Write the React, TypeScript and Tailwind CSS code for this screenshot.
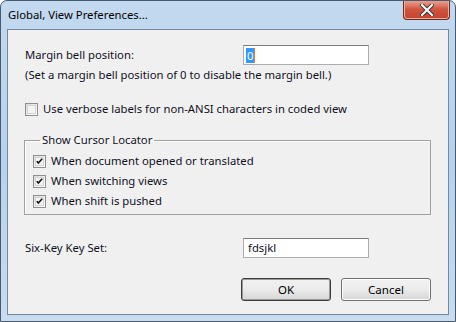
import React from 'react';

function CheckBox({ checked }: { checked?: boolean }) {
  return (
    <span className="flex h-[13px] w-[13px] shrink-0 items-center justify-center border border-[#8e8f8f] bg-gradient-to-br from-[#dcdcdc] to-[#ffffff]">
      <span className="flex h-[9px] w-[9px] items-center justify-center border border-[#d3d3d3] bg-[#f4f4f4]">
        {checked && (
          <svg width="9" height="9" viewBox="0 0 9 9">
            <path d="M1 4 L3 6.5 L8 1" fill="none" stroke="#111" strokeWidth="2" />
          </svg>
        )}
      </span>
    </span>
  );
}

function CheckRow({ label, checked }: { label: string; checked?: boolean }) {
  return (
    <div className="flex h-[16px] items-center gap-[5px]">
      <CheckBox checked={checked} />
      <span>{label}</span>
    </div>
  );
}

function Button({ label, primary }: { label: string; primary?: boolean }) {
  return (
    <button
      className={
        'h-[23px] w-[90px] rounded-[3px] border bg-gradient-to-b from-[#f2f2f2] via-[#ebebeb] to-[#d6d6d6] text-[11.5px] text-black ' +
        (primary ? 'border-[#3c3c3c] shadow-[inset_0_0_0_1px_#9a9a9a]' : 'border-[#707070] shadow-[inset_0_0_0_1px_#fcfcfc]')
      }
    >
      {label}
    </button>
  );
}

export default function App() {
  return (
    <div
      className="flex h-[322px] w-[456px] flex-col overflow-hidden rounded-t-[7px] border border-[#4a5a6e] bg-gradient-to-b from-[#c3d9f0] via-[#b8d1ec] to-[#c8dcf0] text-[11.3px] text-[#10101e]"
      style={{ fontFamily: '"Noto Sans", "Open Sans", sans-serif' }}
    >
      {/* title bar */}
      <div className="flex h-[28px] shrink-0 items-start justify-between pl-[7px] pr-[5px]">
        <span className="mt-[6px] leading-[16px] text-black">Global, View Preferences...</span>
        <div className="-mt-px flex h-[20px] w-[47px] items-center justify-center rounded-b-[4px] border border-t-0 border-[#6e2a1e] bg-gradient-to-b from-[#e9a89a] via-[#d0533d] to-[#c4452e] shadow-[inset_0_0_0_1px_#eab0a3]">
          <svg width="14" height="12" viewBox="0 0 14 12">
            <path d="M2 1 L12 11 M12 1 L2 11" stroke="#3a3a3a" strokeWidth="4" strokeLinecap="square" />
            <path d="M2 1 L12 11 M12 1 L2 11" stroke="#ffffff" strokeWidth="2" strokeLinecap="square" />
          </svg>
        </div>
      </div>

      {/* client area */}
      <div className="mx-[6px] mb-[6px] flex flex-1 flex-col border border-[#7288a3] bg-[#f0f0f0] pl-[16px] pr-[17px] pt-[15px]">
        <div className="flex h-[20px] items-center">
          <span className="ml-px w-[218px]">Margin bell position:</span>
          <div className="flex h-[20px] w-[126px] items-center border border-[#abadb3] border-t-[#7b7b7b] bg-white pl-[2px]">
            <span className="bg-[#3399ff] px-px leading-[15px] text-white">0</span>
            <span className="h-[15px] w-px bg-[#e67e22]" />
          </div>
        </div>

        <div className="ml-px mt-[2px] leading-[16px]">(Set a margin bell position of 0 to disable the margin bell.)</div>

        <div className="ml-px mt-[18px]">
          <CheckRow label="Use verbose labels for non-ANSI characters in coded view" />
        </div>

        <fieldset className="mt-[15px] border border-[#a0a0a0] pb-[5px] pl-[8px] shadow-[inset_1px_1px_0_#ffffff]">
          <legend className="ml-[7px] px-[2px] leading-[16px]">Show Cursor Locator</legend>
          <div className="mt-[5px] flex flex-col gap-[4px]">
            <CheckRow label="When document opened or translated" checked />
            <CheckRow label="When switching views" checked />
            <CheckRow label="When shift is pushed" checked />
          </div>
        </fieldset>

        <div className="mt-[23px] flex h-[20px] items-center">
          <span className="ml-px w-[218px]">Six-Key Key Set:</span>
          <div className="flex h-[20px] w-[126px] items-center border border-[#abadb3] border-t-[#7b7b7b] bg-white pl-[4px]">
            fdsjkl
          </div>
        </div>

        <div className="mt-[20px] flex justify-end gap-[10px]">
          <Button label="OK" primary />
          <Button label="Cancel" />
        </div>
      </div>
    </div>
  );
}
